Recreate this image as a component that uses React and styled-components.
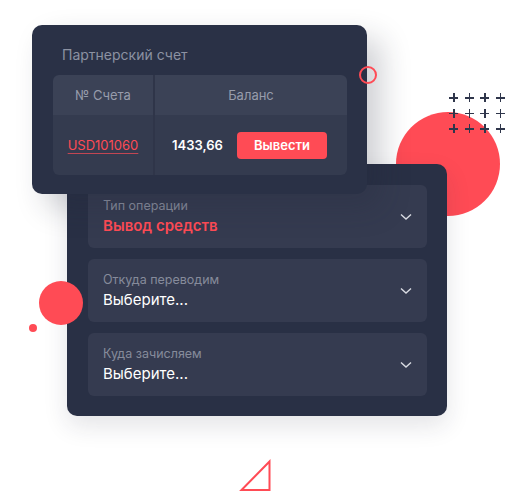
import React from 'react'
import styled, { createGlobalStyle } from 'styled-components'

const GlobalStyle = createGlobalStyle`
  html, body {
    margin: 0;
    padding: 0;
    background: #ffffff;
  }
  body {
    font-family: "Inter", "Liberation Sans", sans-serif;
    -webkit-font-smoothing: antialiased;
  }
`;

const Stage = styled.div`
  position: relative;
  width: 506px;
  height: 492px;
  box-sizing: border-box;
  padding: 25px 0 0 32px;
  overflow: hidden;
`;

const TopCard = styled.div`
  position: relative;
  z-index: 3;
  width: 335px;
  height: 169px;
  box-sizing: border-box;
  padding: 20px 20px 19px 21px;
  background: #2a3146;
  border-radius: 10px;
  box-shadow: 14px 14px 30px rgba(30, 36, 56, 0.22);
  display: flex;
  flex-direction: column;
`;

const CardTitle = styled.div`
  margin-left: 9px;
  height: 20px;
  line-height: 20px;
  font-size: 14px;
  color: #8c92a2;
`;

const Table = styled.div`
  margin-top: 10px;
  border-radius: 6px;
  overflow: hidden;
  display: grid;
  grid-template-columns: 100px 1fr;
  grid-template-rows: 40px 60px;
`;

const HeadCell = styled.div`
  background: #3b4256;
  color: #979cab;
  font-size: 13px;
  display: flex;
  align-items: center;
  justify-content: center;
  border-left: ${p => (p.$divider ? '2px solid #2f3549' : 'none')};
`;

const BodyCell = styled.div`
  background: #343b4f;
  display: flex;
  align-items: center;
  justify-content: ${p => (p.$center ? 'center' : 'flex-start')};
  padding: ${p => (p.$center ? '0' : '0 20px 0 17px')};
  border-left: ${p => (p.$divider ? '2px solid #2f3549' : 'none')};
`;

const AccountLink = styled.a`
  color: #ff4b55;
  font-size: 13px;
  text-decoration: underline;
  text-decoration-color: rgba(255, 75, 85, 0.7);
  text-underline-offset: 3px;
  text-decoration-thickness: 1px;
`;

const Amount = styled.span`
  color: #ffffff;
  font-size: 13px;
  font-weight: 600;
`;

const WithdrawButton = styled.button`
  margin-left: auto;
  width: 90px;
  height: 27px;
  border: none;
  border-radius: 4px;
  background: #ff4b55;
  color: #ffffff;
  font-family: inherit;
  font-size: 13px;
  font-weight: 600;
  cursor: pointer;
`;

const FormCard = styled.div`
  position: relative;
  z-index: 2;
  margin: -30px 0 0 35px;
  width: 380px;
  box-sizing: border-box;
  padding: 21px 20px 20px 21px;
  background: #293045;
  border-radius: 10px;
  box-shadow: 0 10px 24px rgba(30, 36, 56, 0.12);
  display: flex;
  flex-direction: column;
  gap: 11px;
`;

const Field = styled.div`
  height: 63px;
  box-sizing: border-box;
  padding: 0 15px;
  background: #353b50;
  border-radius: 6px;
  display: flex;
  align-items: center;
`;

const FieldText = styled.div`
  flex: 1;
  display: flex;
  flex-direction: column;
  gap: 3px;
`;

const FieldLabel = styled.span`
  font-size: 12.5px;
  color: #868b9b;
`;

const FieldValue = styled.span`
  font-size: 15px;
  font-weight: ${p => (p.$accent ? 600 : 400)};
  color: ${p => (p.$accent ? '#ff4b55' : '#ffffff')};
`;

const Deco = styled.div`
  position: absolute;
  z-index: ${p => p.$z || 1};
  left: ${p => p.$x}px;
  top: ${p => p.$y}px;
  width: ${p => p.$size}px;
  height: ${p => p.$size}px;
  border-radius: 50%;
  box-sizing: border-box;
  background: ${p => (p.$ring ? 'transparent' : '#ff4b55')};
  border: ${p => (p.$ring ? '2px solid #ff4b55' : 'none')};
`;

const PlusGrid = styled.div`
  position: absolute;
  z-index: 1;
  left: 449px;
  top: 93px;
  display: grid;
  grid-template-columns: repeat(4, 9px);
  grid-template-rows: repeat(3, 9px);
  column-gap: 6.5px;
  row-gap: 6.5px;
`;

const Plus = styled.span`
  position: relative;
  width: 9px;
  height: 9px;
  &::before, &::after {
    content: '';
    position: absolute;
    background: #2f364b;
  }
  &::before { left: 0; top: 4px; width: 9px; height: 1.5px; }
  &::after { left: 4px; top: 0; width: 1.5px; height: 9px; }
`;

const Triangle = styled.svg`
  position: absolute;
  left: 238px;
  top: 458px;
`;

const Chevron = () => (
  <svg width="12" height="8" viewBox="0 0 12 8">
    <path d="M1 1.5 L6 6 L11 1.5" fill="none" stroke="#d9dbe2" strokeWidth="1.4" />
  </svg>
);

const fields = [
  { label: 'Тип операции', value: 'Вывод средств', accent: true },
  { label: 'Откуда переводим', value: 'Выберите...' },
  { label: 'Куда зачисляем', value: 'Выберите...' },
];

export default function App() {
  return (
    <>
      <GlobalStyle />
      <Stage>
        <Deco $x={396} $y={112} $size={104} />
        <PlusGrid>
          {Array.from({ length: 12 }).map((_, i) => <Plus key={i} />)}
        </PlusGrid>
        <Deco $x={359} $y={66} $size={18} $ring $z={4} />
        <Deco $x={39} $y={281} $size={44} $z={4} />
        <Deco $x={29} $y={324} $size={8} $z={4} />
        <Triangle width="36" height="36" viewBox="0 0 36 36">
          <path d="M31.5 3.5 L31.5 32 L3.5 32 Z" fill="none" stroke="#ff4b55" strokeWidth="2" strokeLinejoin="miter" />
        </Triangle>

        <TopCard>
          <CardTitle>Партнерский счет</CardTitle>
          <Table>
            <HeadCell>№ Счета</HeadCell>
            <HeadCell $divider>Баланс</HeadCell>
            <BodyCell $center>
              <AccountLink>USD101060</AccountLink>
            </BodyCell>
            <BodyCell $divider>
              <Amount>1433,66</Amount>
              <WithdrawButton>Вывести</WithdrawButton>
            </BodyCell>
          </Table>
        </TopCard>

        <FormCard>
          {fields.map(f => (
            <Field key={f.label}>
              <FieldText>
                <FieldLabel>{f.label}</FieldLabel>
                <FieldValue $accent={f.accent}>{f.value}</FieldValue>
              </FieldText>
              <Chevron />
            </Field>
          ))}
        </FormCard>
      </Stage>
    </>
  )
}
